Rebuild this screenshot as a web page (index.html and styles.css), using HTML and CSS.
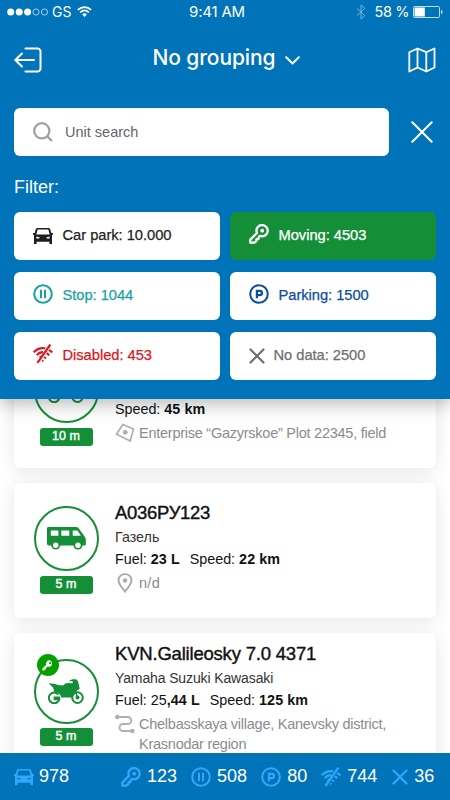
FILE: index.html
```html
<!DOCTYPE html>
<html lang="en">
<head>
<meta charset="utf-8">
<title>Units</title>
<link rel="stylesheet" href="styles.css">
</head>
<body>
<svg class="sprite" aria-hidden="true">
  <symbol id="car" viewBox="0 0 20 16">
    <path fill="currentColor" fill-rule="evenodd" d="M4.6 0H15.4C16.3 0 16.9.4 17.2 1.200L18.300 5H20V6.800H19V16H16.400V13.800H3.600V16H1V6.800H0V5H1.700L2.800 1.200C3.100.400 3.700 0 4.600 0ZM4.700 1.600 3.300 6.400H16.700L15.300 1.600ZM3.400 8.400V10.600H6.200L6.800 9.400ZM16.600 8.400 13.200 9.400 13.800 10.600H16.600Z"/>
  </symbol>
  <symbol id="key" viewBox="0 0 20 20">
    <path fill="none" stroke="currentColor" stroke-width="2.300" stroke-linejoin="round" d="M8 8.900C7 6.600 7.500 4.200 9.200 2.600c2.200-2.100 5.700-2.100 7.900.1s2.200 5.700 0 7.900c-1.600 1.600-4 2-6.100 1.200l-1.300 1.300-.2 1.900-2 .1-.3 2.100L5 18.700H1.300v-3.100z"/>
    <circle cx="13.200" cy="6.700" r="1.900" fill="currentColor"/>
  </symbol>
  <symbol id="keysolid" viewBox="0 0 12 12">
    <path fill="currentColor" fill-rule="evenodd" d="M8 .3a3.600 3.600 0 0 0-3.400 4.800L.4 9.300v2.200h2.400l.2-1.400h1.200l.2-1.300 1.700-1.600A3.600 3.600 0 1 0 8 .3zm.8 1.900a1.200 1.200 0 1 1 0 2.400 1.200 1.200 0 0 1 0-2.400z"/>
  </symbol>
  <symbol id="pause" viewBox="0 0 20 20">
    <g fill="none" stroke="currentColor" stroke-width="2"><circle cx="10" cy="10" r="8.800"/><path d="M8 5.800v8.400M12 5.800v8.400"/></g>
  </symbol>
  <symbol id="parking" viewBox="0 0 20 20">
    <circle cx="10" cy="10" r="8.800" fill="none" stroke="currentColor" stroke-width="2"/>
    <path fill="none" stroke="currentColor" stroke-width="2.200" d="M7.900 14.200V6.800h2.900a2.100 2.100 0 0 1 0 4.300H8"/>
  </symbol>
  <symbol id="offline" viewBox="0 0 20 20">
    <g fill="none" stroke="currentColor" stroke-width="2.100">
      <path d="M17.400.5 4.400 18.800" stroke-width="2.200"/>
      <path d="M.6 8.400C4 4.700 8 3.700 12.300 4.300M3.800 11.200C5.600 9 7.600 8.100 10 8.100M6.700 13.500l1.500-1.200M16 5.800l3.400 2.600M13.600 9.200l2.700 2M11 13l2 1.500"/>
      <path d="m9 17.500 1.200-1.500" stroke-width="1.500"/>
    </g>
  </symbol>
  <symbol id="cross" viewBox="0 0 16 16">
    <path fill="none" stroke="currentColor" stroke-width="2.200" stroke-linecap="round" d="m1.500 1.500 13 13m0-13-13 13"/>
  </symbol>
  <symbol id="moto" viewBox="0 0 36 25">
    <path fill="currentColor" d="M.5 4.200c3 .3 7.500.3 9.500 1.800l5 .6c2-2.300 4.500-2.900 7-2.300l3-.4-.6-1.600-3.300-.1C22.500.2 27 0 28.800.8c1.400 1 2.200 5.500 2.900 8.900l-3.400 2.500c-2 1-3.600 3-4.300 6.300H13.300c-.6-3-2.900-5.300-7-5.500L5 8.500z"/>
    <g fill="none" stroke="currentColor" stroke-width="2"><path d="M10.300 15.600a5.300 5.300 0 1 0 1 4.600H6.600v-1.700H12"/><circle cx="29.500" cy="18.600" r="5.300"/></g>
    <circle cx="29.500" cy="18.600" r="2" fill="currentColor"/>
    <path fill="none" stroke="currentColor" stroke-width="1.500" d="m27.200 12 2.300 6.600"/>
  </symbol>
  <symbol id="van" viewBox="0 0 39 23">
    <path fill="currentColor" fill-rule="evenodd" d="M1.500 0H29c1.300 0 2.200.7 3 1.700l6 8.400c.6.800.8 1.500.8 2.500v4.900c0 .7-.5 1.100-1.200 1.100H2c-1.200 0-2-.8-2-2V1.500C0 .6.600 0 1.500 0zM3.800 3.600v5.200h7.600V3.600zm10.500 0v5.200h8V3.600zm11.400 0v5.200h8.200l-3.500-5.200z"/>
    <g fill="currentColor"><circle cx="8.700" cy="18.200" r="4.400"/><circle cx="31" cy="18.200" r="4.400"/></g>
    <g fill="#fff"><circle cx="8.700" cy="18.200" r="2.700"/><circle cx="31" cy="18.200" r="2.700"/></g>
  </symbol>
</svg>

<div class="app">
  <header class="panel">
    <div class="status">
      <div class="status-side">
        <svg width="42" height="8" viewBox="0 0 42 8"><g fill="#fff"><circle cx="3.700" cy="4" r="3.500"/><circle cx="12.200" cy="4" r="3.500"/><circle cx="20.600" cy="4" r="3.500"/></g><g fill="none" stroke="#cfe9f8" stroke-width=".8"><circle cx="29" cy="4" r="3.100"/><circle cx="37.500" cy="4" r="3.100"/></g></svg>
        <span class="carrier">GS</span>
        <svg class="wifi" width="15" height="11" viewBox="0 0 15 11"><g fill="none" stroke="#fff" stroke-width="1.700"><path d="M.8 3.900c4-3.700 9.400-3.700 13.400 0M3.100 6.500c2.700-2.500 6.100-2.500 8.800 0"/></g><path fill="#fff" d="M5.100 8.300c1.500-1.300 3.300-1.300 4.800 0L7.500 10.900z"/></svg>
      </div>
      <div class="clock">9:41 AM</div>
      <div class="status-side status-end">
        <svg width="10" height="16" viewBox="0 0 10 16"><path fill="none" stroke="#72b5de" stroke-width="1" d="m.8 4.200 8 7.500L5 15V1l3.800 3.300-8 7.500"/></svg>
        <span class="battery-text">58 %</span>
        <svg width="30" height="12" viewBox="0 0 30 12"><rect x=".5" y=".5" width="26" height="11" rx="1" fill="none" stroke="#b9ddf1"/><path fill="#fff" d="M1.500 1.500h10.300v9H1.500z"/><path fill="#b9ddf1" d="M28 4h.5l1 1v2l-1 1H28z"/></svg>
      </div>
    </div>

    <div class="topbar">
      <svg width="28" height="26" viewBox="0 0 28 26"><g fill="none" stroke="#fff" stroke-width="2" stroke-linecap="round" stroke-linejoin="round"><path d="M11.500 1.500H23.500a3 3 0 0 1 3 3v17a3 3 0 0 1-3 3H11.500"/><path d="M20 13H1.500M8 6.500 1.300 13 8 19.500"/></g></svg>
      <h1 class="title"><span>No grouping</span><svg width="15" height="9" viewBox="0 0 15 9"><path fill="none" stroke="#fff" stroke-width="2" stroke-linecap="round" stroke-linejoin="round" d="m1.200 1.200 6.300 6.300 6.300-6.300"/></svg></h1>
      <svg width="28" height="26" viewBox="0 0 28 26"><path fill="none" stroke="#fff" stroke-width="1.800" stroke-linejoin="round" d="M1.300 5.200 9.500 1.500l8.800 3.700 8.200-3.700v19l-8.200 4-8.800-4-8.200 4zM9.500 1.500v19M18.300 5.200v19.300"/></svg>
    </div>

    <div class="search-row">
      <div class="search">
        <svg width="20" height="20" viewBox="0 0 20 20"><g fill="none" stroke="#a0a0a0" stroke-width="2.200"><circle cx="8.800" cy="8.800" r="7.600"/><path d="m14 14 5 5"/></g></svg>
        <span>Unit search</span>
      </div>
      <svg class="close" width="22" height="22" viewBox="0 0 22 22"><path fill="none" stroke="#fff" stroke-width="2" stroke-linecap="round" d="m1.300 1.300 19.400 19.400m0-19.400L1.300 20.700"/></svg>
    </div>

    <h2 class="filter-label">Filter:</h2>
    <div class="filters">
      <div class="filter f-all"><svg class="ic car"><use href="#car"/></svg><span>Car park: 10.000</span></div>
      <div class="filter f-moving"><svg class="ic"><use href="#key"/></svg><span>Moving: 4503</span></div>
      <div class="filter f-stop"><svg class="ic"><use href="#pause"/></svg><span>Stop: 1044</span></div>
      <div class="filter f-parking"><svg class="ic"><use href="#parking"/></svg><span>Parking: 1500</span></div>
      <div class="filter f-disabled"><svg class="ic"><use href="#offline"/></svg><span>Disabled: 453</span></div>
      <div class="filter f-nodata"><svg class="ic cross"><use href="#cross"/></svg><span>No data: 2500</span></div>
    </div>
  </header>

  <main class="list">
    <article class="card card-first">
      <div class="avatar">
        <div class="ring"><svg class="moto"><use href="#moto"/></svg></div>
        <div class="age">10 m</div>
      </div>
      <div class="info">
        <p class="stats speed-only">Speed: <b>45 km</b></p>
        <div class="place">
          <svg width="20" height="20" viewBox="0 0 20 20"><path fill="none" stroke="#b0b0b0" stroke-width="1.700" d="M7.800 1.500 18.500 6l-3.300 12L1.500 11.200z"/><circle cx="10.300" cy="9.300" r="2.400" fill="#b0b0b0"/></svg>
          <span class="address">Enterprise “Gazyrskoe” Plot 22345, field</span>
        </div>
      </div>
    </article>

    <article class="card card-van">
      <div class="avatar">
        <div class="ring"><svg class="van"><use href="#van"/></svg></div>
        <div class="age">5 m</div>
      </div>
      <div class="info">
        <h3 class="name plate">А036РУ123</h3>
        <p class="model gazelle">Газель</p>
        <p class="stats">Fuel: <b>23 L</b><span class="speed">Speed: <b>22 km</b></span></p>
        <div class="place">
          <svg width="20" height="20" viewBox="0 0 20 20"><path fill="none" stroke="#aaa" stroke-width="1.900" d="M10 1.100c3.700 0 6.500 2.600 6.500 6.200 0 4-3.900 7.800-6.500 11.300C7.400 15.100 3.500 11.300 3.500 7.300c0-3.600 2.800-6.200 6.500-6.200z"/><circle cx="10" cy="7.500" r="2.200" fill="#aaa"/></svg>
          <span class="unknown">n/d</span>
        </div>
      </div>
    </article>

    <article class="card card-moto">
      <div class="avatar">
        <div class="ring"><svg class="moto"><use href="#moto"/></svg><span class="dot"><svg><use href="#keysolid"/></svg></span></div>
        <div class="age">5 m</div>
      </div>
      <div class="info">
        <h3 class="name">KVN.Galileosky 7.0 4371</h3>
        <p class="model">Yamaha Suzuki Kawasaki</p>
        <p class="stats">Fuel: <i>25</i><b>,44 L</b><span class="speed">Speed: <b>125 km</b></span></p>
        <div class="place">
          <svg width="20" height="20" viewBox="0 0 20 20"><path fill="none" stroke="#b0b0b0" stroke-width="1.900" d="M2.500 3h10.300a3.500 3.500 0 0 1 0 7H8a3.500 3.500 0 0 0 0 7h9"/><circle cx="2.300" cy="3" r="2.300" fill="#b0b0b0"/><circle cx="17.300" cy="17" r="2.300" fill="#b0b0b0"/></svg>
          <span class="address">Chelbasskaya village, Kanevsky district,<br>Krasnodar region</span>
        </div>
      </div>
    </article>
  </main>

  <footer class="totals">
    <div class="total t-all"><svg class="ic car"><use href="#car"/></svg><span>978</span></div>
    <div class="total"><svg class="ic"><use href="#key"/></svg><span>123</span></div>
    <div class="total"><svg class="ic"><use href="#pause"/></svg><span>508</span></div>
    <div class="total"><svg class="ic"><use href="#parking"/></svg><span>80</span></div>
    <div class="total"><svg class="ic"><use href="#offline"/></svg><span>744</span></div>
    <div class="total t-nodata"><svg class="ic cross"><use href="#cross"/></svg><span>36</span></div>
  </footer>
</div>
</body>
</html>
```
FILE: styles.css
```css
* { box-sizing: border-box; margin: 0; padding: 0; }
body { font-family: "Liberation Sans", Arial, sans-serif; color: #111; background: #fff; }
svg { display: block; flex: none; }
.sprite { position: absolute; width: 0; height: 0; }
.app { width: 450px; height: 800px; display: flex; flex-direction: column; overflow: hidden; }

/* Blue top panel */
.panel { position: relative; z-index: 2; flex: none; height: 399px; padding: 0 14px; background: #0073b9; color: #fff; box-shadow: 0 4px 18px rgba(0,0,0,.3); }
.status { display: grid; grid-template-columns: 1fr auto 1fr; align-items: center; height: 24px; margin: 0 -7px; font-family: Inter, sans-serif; font-size: 15px; line-height: 24px; }
.status-side { display: flex; align-items: center; }
.status-end { justify-content: flex-end; }
.carrier { margin-left: 3px; font-size: 14px; }
.wifi { margin-left: 6px; margin-bottom: 1px; }
.clock { position: relative; left: -8px; letter-spacing: -.2px; }
.battery-text { margin: 0 4px 0 8px; font-size: 14.500px; letter-spacing: -.4px; }
.topbar { display: flex; align-items: center; justify-content: space-between; height: 48px; margin-top: 12px; }
.title { display: flex; align-items: center; gap: 9px; font: 500 21px/28px Inter, sans-serif; letter-spacing: -.1px; padding: 0 0 4px 2px; }
.title svg { margin-top: 5px; }
.search-row { display: flex; align-items: center; height: 48px; margin-top: 24px; }
.search { display: flex; align-items: center; width: 375px; height: 48px; padding: 0 19px; gap: 12px; background: #fff; border-radius: 6px; color: #62666c; font-size: 14.500px; letter-spacing: 0; }
.search span { margin-top: -1px; }
.close { margin-left: 22px; }
.filter-label { margin-top: 20px; height: 22px; font-size: 18px; line-height: 22px; font-weight: 400; }
.filters { display: grid; grid-template-columns: 206px 206px; grid-auto-rows: 48px; column-gap: 10px; row-gap: 12px; margin-top: 14px; }
.filter { display: flex; align-items: center; gap: 9.500px; padding: 0 19px 2px; background: #fff; border-radius: 6px; font-size: 14.700px; -webkit-text-stroke: .25px currentColor; }
.filter .ic { margin-top: -2px; }
.filter .car { margin-top: 1px; }
.filter span { letter-spacing: -.03px; }
.ic { width: 20px; height: 20px; }
.ic.car { height: 16px; }
.ic.cross { width: 16px; height: 16px; }
.f-all { color: #1e1e20; }
.f-moving { background: #158f37; color: #fff; }
.f-stop { color: #17a2a2; }
.f-parking { color: #0d4ca3; }
.f-disabled { color: #d81920; }
.f-nodata { gap: 8.500px; color: #6e6e73; }
.f-nodata .cross { margin-top: 2px; }

/* Unit list, scrolled under the panel */
.list { flex: 1; min-height: 0; overflow: hidden; padding: 0 14px; display: flex; flex-direction: column; gap: 15px; }
.card { flex: none; display: flex; padding-left: 19px; border-radius: 6px; background: #fff; box-shadow: 0 3px 18px rgba(0,0,0,.1); }
.card-first { height: 135px; margin-top: -66px; padding-top: 25px; }
.card-van { height: 135px; padding-top: 23px; }
.card-moto { height: 160px; padding-top: 26px; }
.avatar { width: 66px; display: flex; flex-direction: column; align-items: center; gap: 5px; }
.card-moto .avatar { gap: 4px; }
.ring { position: relative; width: 65px; height: 65px; border: 2px solid #158f37; border-radius: 50%; display: flex; align-items: center; justify-content: center; color: #158f37; }
.van { width: 39px; height: 23px; }
.moto { width: 36px; height: 25px; }
.dot { position: absolute; left: 1px; top: -7px; width: 22px; height: 22px; border-radius: 50%; background: #08a000; color: #fff; display: flex; align-items: center; justify-content: center; }
.dot svg { width: 11px; height: 11px; }
.age { width: 53px; height: 18px; border-radius: 3px; background: #158f37; color: #fff; text-align: center; font-size: 12.500px; line-height: 17px; -webkit-text-stroke: .4px #fff; }
.info { margin-left: 16px; white-space: nowrap; }
.card-van .info { margin-top: -5px; }
.card-moto .info { margin-top: -17px; }
.name { font-size: 18.500px; line-height: 24px; font-weight: 400; letter-spacing: -.2px; -webkit-text-stroke: .4px #111; }
.plate { letter-spacing: -.3px; }
.model { height: 22px; margin-top: 1px; font-size: 14px; line-height: 22px; letter-spacing: -.12px; color: #333; }
.gazelle { font-size: 14.300px; letter-spacing: 0; }
.stats { height: 22px; font-size: 14.300px; line-height: 22px; }
.stats b { letter-spacing: .1px; }
.stats i { font-style: normal; }
.speed { margin-left: 10px; }
.speed-only { margin-top: 40px; }
.place { display: flex; gap: 4px; margin-top: 3px; color: #8b8b8f; font-size: 14.500px; line-height: 20px; }
.address { letter-spacing: -.25px; }
.unknown { letter-spacing: .3px; }

/* Totals bar */
.totals { position: relative; z-index: 2; flex: none; display: flex; align-items: center; gap: 14px; height: 47px; padding: 0 14px; background: #0073b9; color: #fff; font-size: 18px; letter-spacing: 0; }
.total { display: flex; align-items: center; gap: 6px; }
.total .ic { color: #31a9fa; }
.t-all { gap: 5px; margin-right: 38px; }
.t-nodata { margin-left: 1px; }
```
